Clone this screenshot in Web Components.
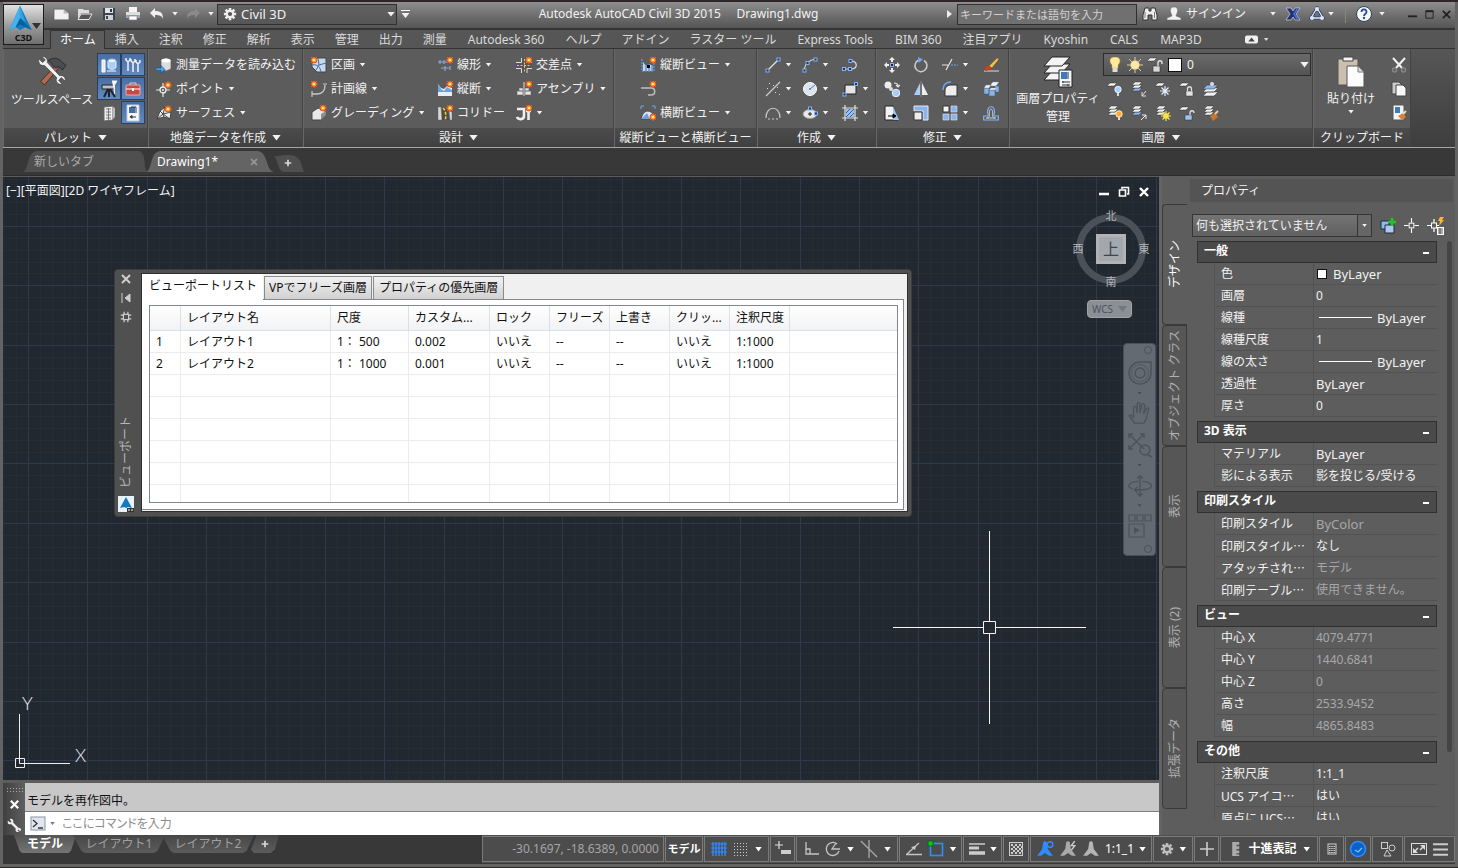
<!DOCTYPE html>
<html lang="ja">
<head>
<meta charset="utf-8">
<title>Autodesk AutoCAD Civil 3D 2015 - Drawing1.dwg</title>
<style>
html,body{height:100%}
body{margin:0;background:#636363;color:#f2f2f2;font:12px/16px "Noto Sans","Noto Sans CJK JP",sans-serif}
</style>
</head>
<body>
<cad-app></cad-app>
<script>
const RESET = `<style>
:host{box-sizing:border-box}
*,*::before,*::after{box-sizing:border-box}
button,input,select{font:inherit;color:inherit;background:none;border:0;padding:0;margin:0;outline:0;border-radius:0}
button{display:flex;align-items:center;justify-content:center;white-space:nowrap}
select{appearance:none}
a{color:inherit;text-decoration:none}
[hidden]{display:none!important}
</style>`;

function define(tag, html, ready) {
  const t = document.createElement('template');
  t.innerHTML = RESET + html;
  customElements.define(tag, class extends HTMLElement {
    constructor() {
      super();
      this.attachShadow({ mode: 'open' }).append(t.content.cloneNode(true));
    }
    connectedCallback() { if (ready) ready(this, this.shadowRoot); }
  });
}

/* ---------- icons ---------- */
const star = (x, y) => `<circle cx="${x}" cy="${y}" r="3.2" fill="#e8401c"/><path d="M${x} ${y-3.6}V${y+3.6}M${x-3.6} ${y}H${x+3.6}M${x-2.5} ${y-2.5}L${x+2.5} ${y+2.5}M${x+2.5} ${y-2.5}L${x-2.5} ${y+2.5}" stroke="#ff9a3c" stroke-width=".8"/><circle cx="${x}" cy="${y}" r="1.6" fill="#fff25a"/>`;
const node = (x, y) => `<rect x="${x-1.5}" y="${y-1.5}" width="3" height="3" fill="#26374f" stroke="#7fb4ff"/>`;
const sheet = (x, y, c = '#f4f4f4', w = 7) => `<path d="M${x+3} ${y}h${w}l-3 3h-${w}z" fill="${c}" stroke="#333" stroke-width=".5"/>`;
const sheets = (c = '#a9c8ee') => sheet(1, 7, c) + sheet(1, 4) + sheet(1, 1);
const ln = (d, c = '#e4e4e4', w = 1.2) => `<path d="${d}" fill="none" stroke="${c}" stroke-width="${w}"/>`;
const dash = (s, d) => s.replace('/>', ` stroke-dasharray="${d}"/>`);
const gear = (c, hole) => `<g transform="translate(8 8)"><g stroke="${c}" stroke-width="3"><path d="M0-7V7M-7 0H7M-5-5L5 5M5-5L-5 5"/></g><circle r="4.8" fill="${c}"/><circle r="2.4" fill="${hole}"/></g>`;
const person = c => `<path d="M8 1c1.4 0 1.8 1 1.8 2.500L10.500 8l4.500 6h-3.500L8 11.500 4.500 14H1l4.500-6 .7-4.500C6.200 2 6.600 1 8 1z" fill="${c}"/>`;

const ICONS = {
  logo: [40, `<path d="M19 3L7 30l7-3 5 3 6-3 7 3z" fill="#0f7ec4"/><path d="M19 3L7 30l7-3 5-9z" fill="#31a4e6"/><path d="M19 3l6 18-6-4-5 10-7 3z" fill="#54bdf2" opacity=".55"/><path d="M19 17l-5 10 5-3 6 3 7 3z" fill="#0b5f9d"/>`],
  new: [16, `<path d="M1 3h9l5 4v6H1z" fill="#f1f1f1" stroke="#555" stroke-width=".5"/><path d="M10 3v4h5z" fill="#b9b9b9"/>`],
  open: [16, `<path d="M1 3h5l1 1h5v3H4l-3 6z" fill="#ddd"/><path d="M4 8h11l-3 5.500H1z" fill="#555" stroke="#e6e6e6"/>`],
  save: [16, `<path d="M2 2h12v12H2z" fill="#3b4350"/><rect x="4" y="2" width="8" height="5" fill="#dfe4ea"/><rect x="4" y="9" width="8" height="5" fill="#cfd3d8"/><rect x="9" y="3" width="2" height="3" fill="#333"/><rect x="5" y="10" width="2" height="3" fill="#444"/>`],
  print: [16, `<path d="M4 1h8v5H4z" fill="#f6f6f6"/><path d="M1 6h14v5H1z" fill="#dedede"/><path d="M1 9h14v3H1z" fill="#9aa6b5"/><path d="M4 10h8v4H4z" fill="#fff" stroke="#777" stroke-width=".6"/>`],
  undo: [16, `<path d="M1 7l5-5v3c6 0 8 2 8 8-1-3-3-4-8-4v3z" fill="#f0f0f0"/>`],
  redo: [16, `<path d="M15 7l-5-5v3c-6 0-8 2-8 8 1-3 3-4 8-4v3z" fill="#8b8b8b"/>`],
  gear: [16, gear('#efefef', '#555')],
  gearS: [16, gear('#bdbdbd', '#555')],
  gearT: [16, ln('M5.500 1v4M10.500 1v4M5.500 11v4M10.500 11v4M1 5.500h4M1 10.500h4M11 5.500h4M11 10.500h4', '#cfcfcf', 1.6) + '<rect x="4.500" y="4.500" width="7" height="7" fill="none" stroke="#cfcfcf" stroke-width="1.600"/>'],
  binoc: [16, `<path d="M3 2h4v3h2V2h4l2 7v5h-5V9H6v5H1V9z" fill="#eee" stroke="#333"/><path d="M3 6v6M12.500 6v6" stroke="#777"/>`],
  user: [16, `<path d="M8 1c3 0 4 2 3.500 4.500C11 8 10 9 10 10l5 2v2H1v-2l5-2c0-1-1-2-1.500-4.500C4 3 5 1 8 1z" fill="#f2f2f2" stroke="#666" stroke-width=".5"/>`],
  exchange: [16, `<path d="M1 2h5l2 3 2-3h5l-4 6 4 6h-5l-2-3-2 3H1l4-6z" fill="#23336e" stroke="#cfd6ea" stroke-width=".7"/><path d="M11 3h3l-4 5 4 5h-3L8 8z" fill="#4a6cc4"/>`],
  a360: [16, `<path d="M8 2l6 10H2z" fill="none" stroke="#2c3d73" stroke-width="3"/><path d="M8 2l6 10H2z" fill="none" stroke="#e4e9f7" stroke-width="1.300"/><circle cx="8" cy="3" r="2" fill="#dfe6f7"/><circle cx="3" cy="12" r="2" fill="#dfe6f7"/><circle cx="13" cy="12" r="2" fill="#dfe6f7"/>`],
  help: [16, `<circle cx="8" cy="8" r="7.500" fill="#f3f6fb" stroke="#345"/><path d="M5.500 6c0-3.500 5-3.500 5 0 0 2-2.500 2-2.500 4" fill="none" stroke="#2b4d9b" stroke-width="1.800"/><circle cx="8" cy="12" r="1.200" fill="#2b4d9b"/>`],
  min: [12, ln('M1 8h10', '#222', 2)], max: [12, '<path d="M2 2h8v8H2z" fill="none" stroke="#222"/><path d="M2 2.500h8" stroke="#222" stroke-width="2"/>'], close: [12, ln('M2 2l8 8M10 2l-8 8', '#222', 2)],
  minW: [12, ln('M1 8h10', '#fff', 2.5)], restW: [12, '<path d="M4 3V1.500h6.500V8H9M1.500 4h6v6h-6z" fill="none" stroke="#fff" stroke-width="1.600"/>'], closeW: [12, ln('M2 2l8 8M10 2l-8 8', '#fff', 2.4)],
  closeG: [12, ln('M2 2l8 8M10 2l-8 8', '#cfcfcf', 2)], closeD: [12, ln('M3 3l6 6M9 3l-6 6', '#999', 1.6)],
  pin: [12, '<path d="M2 1v10M5 6l5-4v8z" fill="#cfcfcf" stroke="#cfcfcf"/>'],
  minimize: [20, '<rect x="0" y="4" width="20" height="12" rx="3" fill="#f0f0f0"/><path d="M10 7l5 6H5z" fill="#444"/>'],
  tools: [32, `<path d="M4 27L20 10l3 3L8 31z" fill="#b06a50" stroke="#3a2019" stroke-width=".8"/><path d="M12 5c5-4 11-3 14 1l5 4-4 5-4-4-3 2-4-4c-1-2-2-3-4-4z" fill="#4a4d52" stroke="#222" stroke-width=".8"/><path d="M2 3l4 4 3-3-4-3c4-1 7 2 6 6l13 14c4-1 7 2 6 6l-4-4-3 3 4 4c-4 1-8-2-6-7L8 10C4 11 1 8 2 3z" fill="#f3f3f3" stroke="#444" stroke-width=".8"/>`],
  tsurvey: [18, `<path d="M2 4h3v12H2zM7 15h9" stroke="#fff" fill="#dfe9f7"/><path d="M8 5v6c0 3 8 3 8 0V5" fill="#a8d0f7" stroke="#e8f3ff"/><ellipse cx="12" cy="5" rx="4" ry="2" fill="#eaf3ff" stroke="#9cc6f2"/>`],
  tfork: [18, ln('M2 2v2l2 2 2-2V2M4 6v9M7 3v2l2 2 2-2V3M9 7v9M12 4v2l2 2 2-2V4M14 8v8', '#f2f2f2', 1.5)],
  tstation: [18, `<path d="M2 5h12v4H2z" fill="#b9c0c8" stroke="#222"/><path d="M8 9L4 17M9 9v8M10 9l5 8" stroke="#20242a" stroke-width="2"/><path d="M12 1h5l-2.500 4v9" stroke="#eee" fill="#fff"/>`],
  tbox: [18, `<path d="M6 5V3h6v2" stroke="#fbb" fill="none"/><rect x="2" y="5" width="14" height="10" rx="1" fill="#c9473f" stroke="#e9b0a8"/><path d="M2 9h14" stroke="#fff"/><rect x="8" y="8" width="2" height="3" fill="#fff"/>`],
  tcalc: [18, `<path d="M4 3l9-1v14l-9 1z" fill="#eee" stroke="#666"/><path d="M6 5h5M6 8h5M6 11h5M6 14h5M8.500 4v12" stroke="#777"/><path d="M13 3l2 1v9l-2 2z" fill="#bbb"/>`],
  tprop: [18, `<path d="M3 1h12v16H3z" fill="#f6f8fb" stroke="#bcd"/><path d="M5 3h6v6H5z" fill="#3f6fb0"/><path d="M7 3h5M12 3v6" stroke="#333"/><path d="M6 13h6M6 13l2-1.500v3" stroke="#333" fill="#333"/>`],
  import: [16, `<path d="M5 3l5-2 5 2v9l-5 2-5-2z" fill="#dcdcdc" stroke="#555" stroke-width=".6"/><ellipse cx="10" cy="3.500" rx="4.500" ry="2" fill="#fff"/><path d="M0 11h5V8.500l4 4-4 3.500v-2.500H0z" fill="#4aa0ee" stroke="#12508e" stroke-width=".6"/>`],
  point: [16, `<circle cx="7" cy="9" r="3" fill="none" stroke="#eee" stroke-width="1.300"/>` + ln('M7 2v4M7 12v4M0 9h4M10 9h4M7 8v2M6 9h2') + star(12, 4)],
  surface: [16, `<path d="M1 14L4 6l5-4 6 5-1 7-6-2z" fill="#ececec" stroke="#444"/><path d="M1 14l6-5 7 5M7 9L4 6M7 9l2-7M7 9l8-2M7 9l1 4" stroke="#444" fill="none"/>` + star(12, 4)],
  parcel: [16, `<path d="M1 6l5-5h9v14H6L1 10z" fill="#c5d8f0" stroke="#444"/><path d="M1 8c6-1 8 2 9 7M7 1l1 7 7-2M8 8l-3 5" stroke="#4c6c94" fill="none"/>` + star(3, 3)],
  feature: [16, ln('M1 13h5c6 0 8-3 8-9', '#c8c8c8', 1.3) + ln('M1 10v6M12 3l4 0', '#c8c8c8') + star(3, 3)],
  grading: [16, `<path d="M1 7l6-4 7 3 1 4-5 5H1z" fill="#e8e8e8" stroke="#444"/><path d="M10 15V9l5-3v4z" fill="#8d8d8d"/>` + star(12, 3)],
  align: [16, ln('M1 5h9M3 3v4M7 3v4M4 11h8M8 9v5M13 9v4', '#86a9d8') + star(13, 3)],
  profile: [16, `<path d="M1 3l3 4 3 1 3-3 5 2v8H1z" fill="#e8eef6"/><path d="M1 3l3 5 3 2 3-4 5 3v2H1z" fill="#6fa0de"/>` + star(13, 3)],
  corridor: [16, `<path d="M1 2h3l1 13H1zM12 6l3 1v8h-2z" fill="#d8d8d8" stroke="#555" stroke-width=".4"/><path d="M5 2c5 1 7 4 7 13H5z" fill="#4b4b4b"/><path d="M6 3c3 3 3 6 2.500 12" stroke="#f5d12e" stroke-width="1.600" fill="none" stroke-dasharray="3 1.500"/>` + star(13, 3)],
  cross: [16, `<path d="M0 6h16v5H0zM6 1h5v15H6z" fill="#555"/><path d="M0 5.500h5.500V1M11 1v4.500h5M0 11.500h5.500V16M11 16v-4.500h5" stroke="#ddd" fill="none"/><path d="M1 8.500h14M8.500 2v13" stroke="#f0cc38" stroke-dasharray="2 1.500"/>` + star(13, 3)],
  assembly: [16, `<path d="M1 10h6v4H1zM9 10h6v4H9zM3 7h4v3H3zM9 7h4v3H9z" fill="#e2e2e2" stroke="#555" stroke-width=".5"/><path d="M8 1v14" stroke="#ddd"/>` + star(13, 3)],
  pipe: [16, `<path d="M1 4h7v7c0 4-6 4-7 1" fill="none" stroke="#eee" stroke-width="2.600"/><path d="M10 6h5M12.500 7v8" stroke="#eee" stroke-width="2.600"/>` + star(13, 3)],
  pview: [16, `<path d="M2 2v12h12V6" fill="none" stroke="#6fa8ec" stroke-dasharray="2 1"/><path d="M3 5l3 4 3-2 4 2v5H3z" fill="#bcd7f7"/><path d="M6 9v5M9 7v7M12 9v5" stroke="#2e6cb8"/><path d="M7 8h3v3H7z" fill="#000"/>` + star(13, 3)],
  sline: [16, ln('M1 7h10c5 0 5 7 0 7H8', '#bdbdbd', 1.5) + star(13, 3)],
  sview: [16, `<path d="M1 4V1h3M12 1h3v3" fill="none" stroke="#6fa8ec"/><path d="M1 14c2-9 8-10 12-5v5z" fill="#dce7f5" stroke="#444"/><path d="M1 14l6-6 3 6" fill="#6f9edb"/>` + star(13, 12)],
  line: [16, ln('M2 14L14 2') + node(2.5, 13.5) + node(13.5, 2.5)],
  arc: [16, ln('M2 13C3 7 6 3 14 2') + node(2.5, 13.5) + node(5.5, 6) + node(13.5, 2.5)],
  pline: [16, ln('M2 12h7M9 12c7 0 7-8 0-8', '#ddd') + node(2, 12) + node(8, 12) + node(8.5, 4)],
  xline: [16, ln('M1 15L15 1', '#ccc') + `<path d="M4 2h1v1H4zM8 4h1v1H8zM2 7h1v1H2zM12 6h1v1h-1zM10 11h1v1h-1zM14 13h1v1h-1z" fill="#ddd"/>`],
  circle: [16, `<circle cx="8" cy="8" r="6.500" fill="#dfe5ee" stroke="#fff"/><path d="M8 8l5-4" stroke="#3f82d8"/><circle cx="8" cy="8" r="1" fill="#3f82d8"/>`],
  rect: [16, `<path d="M3 4h11v9H3z" fill="#e5e5e5" stroke="#222"/>` + node(2.5, 13.5) + node(14, 3)],
  curve: [16, ln('M1 13C1 0 15 0 15 13', '#ccc') + ln('M3 14h2M7 14h2M11 14h2', '#ccc')],
  ellipse: [16, `<ellipse cx="8" cy="9" rx="7" ry="4.500" fill="#e8e8e8" stroke="#999"/><path d="M8 7v4M6 9h4" stroke="#222"/>` + node(8, 3.5) + node(14, 8.5)],
  hatch: [16, `<path d="M4 4h8v8H4z" fill="#9cc2f2"/><path d="M4 8l4-4M4 12l8-8M8 12l4-4" stroke="#2a5fa8"/>` + ln('M3 0v16M13 0v16M0 3h16M0 13h16', '#e2e2e2')],
  move: [16, `<path d="M8 0l3 3H9v2H7V3H5zM8 16l-3-3h2v-2h2v2h2zM0 8l3-3v2h2v2H3v2zM16 8l-3 3V9h-2V7h2V5z" fill="#eee"/><rect x="6.500" y="6.500" width="3" height="3" fill="#222" stroke="#7fb4ff"/>`],
  rotate: [16, ln('M11 3.500A6 6 0 1 1 6 3', '#ccc', 1.5) + `<path d="M5 0l5 2.500L5.500 6z" fill="#6ba7f0"/>`],
  trim: [16, ln('M0 8h6M4 13L10 2') + dash(ln('M9 8h7', '#6ba7f0'), '2 1')],
  match: [16, `<path d="M1 14h15" stroke="#ddd"/><path d="M2 14c0-5 3-6 5-5s0 5-5 5z" fill="#d83a14"/><path d="M6 9L14 1l2 1-7 9z" fill="#f0c050" stroke="#7a4a10" stroke-width=".5"/>`],
  copy: [16, `<circle cx="4" cy="4" r="3.500" fill="#eee"/><circle cx="7" cy="8" r="2" fill="#ddd"/><circle cx="12" cy="12" r="3.800" fill="#a9cdf7" stroke="#e6f0fb"/>` + ln('M10 2c3 0 4 1 4 3M12 4l2 2 2-2')],
  mirror: [16, `<path d="M7 2v12H1z" fill="#a9cdf7"/><path d="M9 2v12h6z" fill="#eee"/><path d="M8 0v16" stroke="#888"/>`],
  fillet: [16, `<path d="M3 15V9c0-3 3-5 6-5h6v11z" fill="#eee" stroke="#333"/><path d="M1 9c0-5 3-8 8-8" stroke="#6ba7f0" stroke-width="1.600" fill="none"/>`],
  explode: [16, `<path d="M1 7h5v6H1zM6 9h6v6H6zM12 5h4v6h-4z" fill="#8fb3e0" stroke="#45638c" stroke-width=".6"/><path d="M1 7l2-3h5L6 7zM6 9l2-2h6l-2 2zM8 3l2-2h6l-3 4H8z" fill="#eef4fb" stroke="#66819f" stroke-width=".4"/>`],
  stretch: [16, `<path d="M1 1h8l5 14H1z" fill="#f2f2f2" stroke="#222"/><path d="M9 1l6 14H9z" fill="#9cc4f2"/><path d="M4 11h7M9 9l3 2-3 2z" stroke="#000" fill="#000"/>`],
  scale: [16, `<path d="M1 1h14v14h-5V6H1z" fill="#8cb3ea" stroke="#e0eaf8"/><path d="M1 7h8v8H1z" fill="#eee" stroke="#333"/>`],
  array: [16, `<path d="M1 1h6v6H1z" fill="#f4f4f4" stroke="#333"/><path d="M9 1h6v6H9zM1 9h6v6H1zM9 9h6v6H9z" fill="#8cb3ea" stroke="#dce8fa" stroke-width=".6"/>`],
  offset: [16, ln('M.7 15v-4h3.300c2 0 1-2 .5-4 0-7 7-7 7 0-.5 2-1.500 4 .5 4h3.300v4z', '#7fb4ff') + ln('M3 13h10M4 13c4-1 2-4 2.500-6.500 0-3 3-3 3 0C10 9 8 12 12 13', '#ddd', .9)],
  layers: [32, `<g stroke="#222">` + [15, 8, 1].map(y => `<path d="M10 ${y}h18l-8 9H2z" fill="#f4f4f4"/>`).join('') + `</g><path d="M17 14h13v17H17z" fill="#f2f5f9" stroke="#222"/><path d="M19 16h6v7h-6z" fill="#4377c0"/><path d="M26 16v7M20 26h8M20 29h8M21 25v2M26 28v2" stroke="#333"/>`],
  bulb: [16, `<path d="M8 0c6 0 6 5 3 8v3H5V8C2 5 2 0 8 0z" fill="#fdeb9a" stroke="#c9a63a" stroke-width=".5"/><path d="M5.500 11h5v4h-5z" fill="#ddd"/>`],
  sun: [16, ln('M8 0v16M0 8h16M2 2l12 12M14 2L2 14', '#d8cfae', 1) + `<circle cx="8" cy="8" r="4.500" fill="#fbe9ac" stroke="#c8ab58" stroke-width=".5"/>`],
  lunlock: [16, sheet(0, 1) + `<path d="M6 9h7v6H6z" fill="#d8d8d8" stroke="#333" stroke-width=".6"/><path d="M11 9V6c0-3 4-3 4 0v1" stroke="#ddd" fill="none" stroke-width="1.400"/>`],
  l1: [16, sheet(0, 2) + `<circle cx="11" cy="8.500" r="3.200" fill="#a8d2fb" stroke="#e6f2ff"/><path d="M10 12h2v3h-2z" fill="#ddd"/>`],
  l2: [16, sheets('#8fb8ec') + ln('M15 10l-4 5M11 11v4h4', '#ddd', 1)],
  l3: [16, sheet(0, 2) + ln('M10 5v10M5 10h10M6.500 6.500l7 7M13.500 6.500l-7 7', '#e2efff', 1.2)],
  l4: [16, sheet(0, 2) + `<path d="M7 10h7v5H7z" fill="#e2e2e2" stroke="#333" stroke-width=".5"/><path d="M8.500 10V8c0-3 4-3 4 0v2" stroke="#ddd" fill="none" stroke-width="1.300"/>`],
  l5: [16, `<path d="M4 11h11l-4 4H0zM4 7h11l-4 4H0z" fill="#f0f0f0" stroke="#333" stroke-width=".5"/><path d="M4 4h11l-4 4H0z" fill="#86b6f0" stroke="#333" stroke-width=".5"/><circle cx="9" cy="3" r="2" fill="#ddd"/>`],
  l6: [16, sheets('#eee') + `<circle cx="12" cy="9" r="3.200" fill="#ffac2e" stroke="#fff0c0"/><path d="M11 12h2v3h-2z" fill="#ddd"/>`],
  l7: [16, sheets('#8fb8ec') + ln('M10 15l5-5M11 10h4v4', '#eee', 1)],
  l8: [16, sheets('#eee') + ln('M11 6v10M6 11h10M7.500 7.500l7 7M14.500 7.500l-7 7', '#ffe14a') + `<circle cx="11" cy="11" r="2.800" fill="#ffe14a"/>`],
  l9: [16, sheet(0, 2) + `<path d="M6 10h7v5H6z" fill="#9cc4f2" stroke="#333" stroke-width=".5"/><path d="M11 10V8c0-3 4-3 4 0" stroke="#ddd" fill="none" stroke-width="1.300"/>`],
  l10: [16, sheets('#eee') + `<path d="M7 11l5-3 3 4-5 4z" fill="#c9762a"/><path d="M12 9l3-3" stroke="#e8c9a0" stroke-width="2"/>`],
  paste: [32, `<path d="M3 3h20v26H3z" fill="#cbbfae" stroke="#555"/><path d="M8 1h10v4H8z" fill="#f5f5f5" stroke="#444"/><path d="M12 10h11l6 6v15H12z" fill="#fcfcfc" stroke="#555"/><path d="M23 10v6h6z" fill="#ddd" stroke="#777"/>`],
  cut: [16, ln('M2 1l9 10M14 1L5 11', '#f2f2f2', 2) + `<circle cx="3.500" cy="13" r="2" fill="none" stroke="#888" stroke-width="1.400"/><circle cx="12.500" cy="13" r="2" fill="none" stroke="#888" stroke-width="1.400"/>`],
  pages: [16, `<path d="M1 1h7l3 3v9H1z" fill="#ccc" stroke="#444"/><path d="M5 4h7l3 3v8H5z" fill="#f8f8f8" stroke="#444"/>`],
  pastep: [16, `<path d="M2 0h11v15H2z" fill="#f2f5f9" stroke="#555"/><path d="M4 2h5v6H4z" fill="#4377c0"/><path d="M7 11l5-3 3 4-4 3z" fill="#d98235"/><path d="M12 9l3-3" stroke="#f1d9ba" stroke-width="2"/>`],
  addsel: [16, `<path d="M1 3h8v8H1z" fill="#8fb8ec" stroke="#1f2c3d"/><path d="M5 7h9v8H5z" fill="#a9c9f0" stroke="#1f2c3d"/><path d="M12 0v8M8 4h8" stroke="#27c027" stroke-width="2.600"/>`],
  pick: [16, ln('M8 0v5M8 11v5M0 8h5M11 8h5', '#fff') + `<rect x="5.500" y="5.500" width="5" height="5" fill="none" stroke="#fff"/>`],
  quick: [18, ln('M7 2v4M7 11v4M0 8.500h4M9 8.500h3', '#fff') + `<rect x="4.500" y="6" width="5" height="5" fill="none" stroke="#fff"/><path d="M13 0h4l-2 3h2l-5 6 1-5h-2z" fill="#ffb52e"/><path d="M10 10h7v8h-7z" fill="#fff"/><path d="M11 12h5M11 14h5M11 16h5M13 11v6" stroke="#333" stroke-width=".8"/>`],
  wheel: [26, `<path d="M2 13a11 11 0 0 1 11-11h11v11a11 11 0 0 1-22 0z" fill="none" stroke="#4c535b" stroke-width="1.500"/><circle cx="13" cy="13" r="5" fill="none" stroke="#4c535b" stroke-width="1.500"/><circle cx="13" cy="13" r="8.500" fill="none" stroke="#4c535b" stroke-width=".7"/>`],
  hand: [26, ln('M7 24c-2-4-4-6-6-8 1-2 4 0 5 2V7c1-2 3-1 3 0l1 6V3c1-2 3-1 3 0v10l2-9c1-2 3-1 3 1l-1 9 3-6c2-1 3 0 2 2-2 6-2 11-5 14z', '#4c535b', 1.4)],
  zoomx: [26, ln('M2 2l15 15M17 2L2 17M2 6V2h4M13 2h4v4M2 13v4h4M21 23l4 2', '#4c535b', 1.5) + '<circle cx="18" cy="18" r="5" fill="none" stroke="#4c535b" stroke-width="1.500"/>'],
  orbit: [26, ln('M13 2v22M10 5l3-3 3 3M10 21l3 3 3-3M16 8c13 1 12 9-1 9H8M10 14l-3 3 3 3M11 8c-12 1-12 7-6 8', '#4c535b', 1.5)],
  motion: [26, ln('M2 2h6v6H2zM10 2h6v6h-6zM18 2h6v6h-6zM2 11h15v13H2z', '#4c535b', 1.2) + '<path d="M7 14l6 3-6 4z" fill="#4c535b"/>'],
  wrench: [16, `<path d="M1 3l3 2 1-1-2-3c3-1 5 1 4 4l6 6c3 0 4 3 2 4l-2-2-1 1 2 2c-3 1-5-1-4-4L5 7C2 8 0 6 1 3z" fill="#eee"/>`],
  prompt: [16, `<rect x="1" y="1" width="14" height="13" fill="#dfe6ee" stroke="#8a96a5"/><path d="M3 4l4 3.500L3 11M8 12h5" stroke="#333" fill="none" stroke-width="1.300"/>`],
  sgrid: [16, ln('M2 1v14M5 1v14M8 1v14M11 1v14M14 1v14', '#2f8cff', 1.4) + ln('M0 3h16M0 7h16M0 11h16', '#2f8cff', 1)],
  sdots: [16, dash(ln('M1 2.500h14M1 5.500h14M1 8.500h14M1 11.500h14M1 14.500h14', '#cfcfcf', 1), '1 2')],
  sinfer: [18, ln('M5 1v8M1 5h8', '#ddd') + '<rect x="7" y="10" width="10" height="4" fill="#ccc"/>'],
  sortho: [16, ln('M3 1v12h13M3 8h4v5', '#c4c4c4', 1.3)],
  spolar: [16, ln('M15 8H7l4-6M14 10A6.500 6.500 0 1 1 12 3', '#c4c4c4', 1.3)],
  siso: [20, ln('M1 1l18 18M10 0v20', '#a6a6a6', 1.5)],
  sangle: [18, ln('M2 14L14 3M1 14.500h16', '#c4c4c4', 1.3) + '<path d="M6 7l4 3 1-4z" fill="#ccc"/>'],
  sosnap: [18, '<rect x="3.500" y="3.500" width="12" height="12" fill="none" stroke="#2f8cff" stroke-width="1.600"/><rect x="1" y="1" width="5" height="5" fill="#18c018" stroke="#063"/>'],
  slw: [18, ln('M1 4h16', '#ccc', 1.5) + ln('M1 8h10', '#ccc', 3) + ln('M1 13h16', '#ccc', 3.5)],
  strans: [16, '<rect x="1.500" y="1.500" width="13" height="13" fill="#555" stroke="#ccc"/>' + dash(ln('M3 4h11M3 8h11M3 12h11', '#ccc', 2), '2 2') + dash(ln('M5 6h9M5 10h9', '#ccc', 2), '2 2')],
  sp1: [16, person('#2f8cff') + '<circle cx="12.500" cy="4" r="2.500" fill="none" stroke="#2f8cff" stroke-width="1.300"/>'],
  sp2: [16, person('#a9a9a9') + ln('M14 1l-3 4h3l-3 4', '#ccc', 1.3)], sp3: [16, person('#b5b5b5')],
  splus: [16, ln('M8 1v14M1 8h14', '#ccc', 1.6)],
  sruler: [10, '<path d="M3 0h5v2H6v1h2v2H6v1h2v2H6v1h2v1H3z" fill="#aaa"/>'],
  scalc: [14, '<rect x="3" y="2" width="8" height="10" fill="none" stroke="#ccc"/>' + dash(ln('M4 4.500h6M4 6.500h6M4 8.500h6M4 10.500h6', '#ccc', 1), '1.5 .7')],
  shw: [18, '<circle cx="9" cy="9" r="7.500" fill="#0a62c4" stroke="#2f8cff" stroke-width="1.600"/><path d="M6 10l3 2 4-4" stroke="#7cc0ff" fill="none" stroke-width="1.200"/>'],
  siso2: [16, '<rect x="1.500" y="1.500" width="6" height="6" fill="none" stroke="#ccc"/><circle cx="12" cy="7" r="3" fill="none" stroke="#ccc"/><path d="M7 9l4 6H4z" fill="none" stroke="#ccc"/>'],
  sfull: [18, '<rect x="1.500" y="3.500" width="15" height="11" fill="none" stroke="#ddd"/><path d="M10 5h5v5zM3 8v5h5z" fill="#ddd"/><path d="M10 10l3-3M5 11l3-3" stroke="#ddd" stroke-width="1.500"/>'],
  smenu: [16, ln('M1 3h14M1 8h14M1 13h14', '#ccc', 1.8)],
  plus: [12, ln('M6 2v8M2 6h8', '#d8d8d8', 2)],
  cube: [16, '<rect width="16" height="16" fill="#e9f2fa"/><path d="M8 1L2 12l4-1 2 1 2-1 4 1z" fill="#1279c2"/><path d="M9 12h7v4H9z" fill="#333"/><path d="M10 14h2M13 14h2" stroke="#fff"/>']
};

define('cad-icon', `<style>:host{display:inline-flex;flex:none}svg{display:block}</style><svg aria-hidden="true"></svg>`, (el, root) => {
  const [box, art] = ICONS[el.getAttribute('name')] || [16, ''];
  const size = el.getAttribute('size') || Math.min(box, 32);
  const svg = root.querySelector('svg');
  svg.setAttribute('width', size);
  svg.setAttribute('height', size);
  svg.setAttribute('viewBox', `0 0 ${box} ${box}`);
  svg.innerHTML = art;
});

/* small drop-down triangle */
define('cad-arrow', `<style>
:host{display:inline-block;flex:none;width:7px;height:4px;background:currentColor;clip-path:polygon(12% 0,88% 0,50% 90%)}
:host([big]){width:9px;height:6px;clip-path:polygon(0 0,100% 0,50% 100%)}
</style>`);

/* ---------- title bar ---------- */
define('title-bar', `<style>
:host{display:flex;align-items:center;flex:none;height:28px;padding:0 0 2px 47px;background:linear-gradient(#8e8e8e,#6a6a6a 60%,#555);border-bottom:2px solid #343434}
.qat{display:flex;align-items:center;gap:2px}
.qat button{width:22px;height:22px}
.qat button.drop{width:10px}
.ws{display:flex;align-items:center;width:180px;height:21px;margin-left:1px;padding:0 1px 0 5px;gap:4px;border:1px solid #303030;background:linear-gradient(#626262,#565656)}
.ws select{flex:1;min-width:0;font-size:13px;height:18px}
.ws cad-arrow,.more cad-arrow{width:8px;height:5px}
.more{margin-left:4px;width:9px;height:10px;flex-direction:column;gap:2px}
.more i{width:9px;height:1px;background:#fff}
h1{flex:1;margin:0;font:inherit;text-align:center;white-space:pre}
.search{width:180px;height:21px;border:1px solid #303030;background:#707070;padding:0 2px;font-size:11px;margin-left:5px}
.search::placeholder{color:#d2d2d2;opacity:1}
.right{display:flex;align-items:center}
.right button{height:22px}
.play{width:5px;height:8px;background:#eee;clip-path:polygon(0 0,100% 50%,0 100%)}
.sep{width:1px;height:18px;background:#858585;margin:0 9px 0 10px}
</style>
<div class="qat">
<button aria-label="新規"><cad-icon name="new" size="17"></cad-icon></button>
<button aria-label="開く"><cad-icon name="open"></cad-icon></button>
<button aria-label="保存"><cad-icon name="save"></cad-icon></button>
<button aria-label="印刷"><cad-icon name="print"></cad-icon></button>
<button aria-label="元に戻す"><cad-icon name="undo"></cad-icon></button>
<button class="drop" aria-label="履歴"><cad-arrow></cad-arrow></button>
<button aria-label="やり直し"><cad-icon name="redo"></cad-icon></button>
<button class="drop" aria-label="履歴"><cad-arrow></cad-arrow></button>
</div>
<div class="ws"><cad-icon name="gear" size="14"></cad-icon><select aria-label="ワークスペース"><option>Civil 3D</option></select><cad-arrow big></cad-arrow></div>
<button class="more" aria-label="カスタマイズ"><i></i><cad-arrow big></cad-arrow></button>
<h1>Autodesk AutoCAD Civil 3D 2015     Drawing1.dwg</h1>
<div class="right">
<span class="play"></span>
<input class="search" type="search" aria-label="検索" placeholder="キーワードまたは語句を入力">
<button style="width:25px" aria-label="検索実行"><cad-icon name="binoc"></cad-icon></button>
<button style="width:24px" aria-label="ユーザー"><cad-icon name="user"></cad-icon></button>
<button style="width:60px">サインイン</button>
<button style="width:37px;padding-left:17px" aria-label="サインインメニュー"><cad-arrow></cad-arrow></button>
<button style="width:20px" aria-label="Exchange"><cad-icon name="exchange"></cad-icon></button>
<button style="width:24px;padding-left:4px" aria-label="A360"><cad-icon name="a360"></cad-icon></button>
<button style="width:8px" aria-label="A360 メニュー"><cad-arrow></cad-arrow></button>
<span class="sep"></span>
<button style="width:18px" aria-label="ヘルプ"><cad-icon name="help"></cad-icon></button>
<button style="width:18px" aria-label="ヘルプメニュー"><cad-arrow></cad-arrow></button>
<button style="width:17px;margin-left:13px" aria-label="最小化"><cad-icon name="min" size="11"></cad-icon></button>
<button style="width:17px" aria-label="最大化"><cad-icon name="max" size="11"></cad-icon></button>
<button style="width:17px" aria-label="閉じる"><cad-icon name="close" size="11"></cad-icon></button>
</div>`);

define('app-menu', `<style>
:host{display:block}
button{position:relative;flex-direction:column;width:41px;height:41px;border:1px solid #1b1b1b;background:linear-gradient(#e2e2e2,#9a9a9a 55%,#6f6f6f)}
cad-icon{margin:-2px 6px -7px 0}
cad-arrow{position:absolute;right:2px;top:18px;color:#333}
b{font:700 9px/12px "Open Sans",sans-serif;color:#111}
</style><button aria-label="アプリケーションメニュー"><cad-icon name="logo" size="36"></cad-icon><b>C3D</b><cad-arrow big></cad-arrow></button>`);

/* ---------- ribbon tabs ---------- */
define('ribbon-tabs', `<style>
:host{display:flex;align-items:stretch;flex:none;height:19px;padding-left:46px;background:#565656;border-bottom:1px solid #333}
button{padding:0 10px;color:#dadada;height:19px}
button.en{padding:0 11px}
button[aria-selected=true]{background:#5c5c5c;color:#fff;border:1px solid #333;border-bottom:0;margin:0 0 0 1px;padding:0 8px 0 9px}
.min{margin-left:22px;gap:5px}
</style>`, (el, root) => {
  root.innerHTML += ['ホーム','挿入','注釈','修正','解析','表示','管理','出力','測量','Autodesk 360','ヘルプ','アドイン','ラスター ツール','Express Tools','BIM 360','注目アプリ','Kyoshin','CALS','MAP3D']
    .map((t, i) => `<button role="tab" class="${/^[A-Z]/.test(t) ? 'en' : ''}" aria-selected="${i === 0}">${t}</button>`).join('') +
    `<button class="min" aria-label="リボンを最小化"><cad-icon name="minimize" size="13"></cad-icon><cad-arrow></cad-arrow></button>`;
});

/* ---------- ribbon ---------- */
define('ribbon-panel', `<style>
:host{display:flex;flex-direction:column;flex:none;width:var(--w);background:#5c5c5c;border-right:1px solid #434343;border-left:1px solid #686868}
.body{flex:1;display:flex;align-items:flex-start;padding:4px 0 0 7px}
footer{display:flex;align-items:center;justify-content:center;gap:6px;height:19px;background:linear-gradient(#4c4c4c,#404040);white-space:nowrap}
</style><div class="body"><slot></slot></div><footer><span></span><cad-arrow big></cad-arrow></footer>`, (el, root) => {
  root.querySelector('span').textContent = el.getAttribute('label');
  root.querySelector('cad-arrow').hidden = el.hasAttribute('plain');
});

define('ribbon-button', `<style>
:host{display:block}
button{height:24px;gap:4px}
</style><button><cad-icon></cad-icon><slot></slot><cad-arrow></cad-arrow></button>`, (el, root) => {
  const icon = root.querySelector('cad-icon'), n = document.createElement('cad-icon');
  n.setAttribute('name', el.getAttribute('icon'));
  icon.replaceWith(n);
  if (!el.textContent) { root.querySelector('slot').remove(); root.querySelector('button').setAttribute('aria-label', el.getAttribute('icon')); }
  root.querySelector('cad-arrow').hidden = !el.hasAttribute('menu');
});

const rb = (icon, menu, text = '') => `<ribbon-button icon="${icon}"${menu ? ' menu' : ''}>${text}</ribbon-button>`;
define('cad-ribbon', `<style>
:host{display:flex;flex:none;height:99px;background:linear-gradient(#565656,#3e3e3e);border-bottom:1px solid #a5a5a5}
.grid{display:grid;grid-auto-rows:24px}
.big{flex-direction:column;justify-content:flex-start;line-height:18px;height:72px;padding-top:3px;gap:2px}
.tog{display:grid;grid-template-columns:24px 24px;grid-auto-rows:24px;margin-left:4px}
.tog button{width:24px;height:23px;border:1px solid #27405f;background:linear-gradient(#4a6ea3,#6289bf)}
.tog button.off{background:none;border-color:transparent}
.layer{display:flex;align-items:center;gap:4px;width:208px;height:23px;border:1px solid #2c2c2c;background:linear-gradient(#6a6a6a,#545454);padding:0 1px 0 3px}
.layer select{flex:1;min-width:0}
.layer i{width:14px;height:14px;background:#fff;border:1px solid #111;margin:0 1px}
.small{grid-template-columns:repeat(5,24px);margin-left:4px;padding-top:1px}
</style>
<ribbon-panel label="パレット" style="--w:145px">
<button class="big" style="width:82px"><cad-icon name="tools" size="30"></cad-icon><span style="margin-top:3px">ツールスペース</span></button>
<div class="tog">
<button aria-label="測量"><cad-icon name="tsurvey"></cad-icon></button><button aria-label="設定"><cad-icon name="tfork"></cad-icon></button>
<button aria-label="プロスペクター"><cad-icon name="tstation"></cad-icon></button><button aria-label="ツールボックス"><cad-icon name="tbox"></cad-icon></button>
<button class="off" aria-label="計算"><cad-icon name="tcalc"></cad-icon></button><button aria-label="プロパティ"><cad-icon name="tprop"></cad-icon></button>
</div></ribbon-panel>
<ribbon-panel label="地盤データを作成" style="--w:155px"><div class="grid">${rb('import',0,'測量データを読み込む')}${rb('point',1,'ポイント')}${rb('surface',1,'サーフェス')}</div></ribbon-panel>
<ribbon-panel label="設計" style="--w:311px"><div class="grid" style="grid-template-columns:126px 79px auto">
${rb('parcel',1,'区画')}${rb('align',1,'線形')}${rb('cross',1,'交差点')}
${rb('feature',1,'計画線')}${rb('profile',1,'縦断')}${rb('assembly',1,'アセンブリ')}
${rb('grading',1,'グレーディング')}${rb('corridor',0,'コリドー')}${rb('pipe',1)}</div></ribbon-panel>
<ribbon-panel label="縦断ビューと横断ビュー" plain style="--w:143px"><div class="grid" style="margin-left:18px">${rb('pview',1,'縦断ビュー')}${rb('sline',0)}${rb('sview',1,'横断ビュー')}</div></ribbon-panel>
<ribbon-panel label="作成" style="--w:119px"><div class="grid" style="grid-template-columns:37px 40px auto">
${rb('line',1)}${rb('arc',1)}${rb('pline',0)}${rb('xline',1)}${rb('circle',1)}${rb('rect',1)}${rb('curve',1)}${rb('ellipse',1)}${rb('hatch',1)}</div></ribbon-panel>
<ribbon-panel label="修正" style="--w:133px"><div class="grid" style="grid-template-columns:29px 29px 41px auto">
${rb('move',0)}${rb('rotate',0)}${rb('trim',1)}${rb('match',0)}${rb('copy',0)}${rb('mirror',0)}${rb('fillet',1)}${rb('explode',0)}${rb('stretch',0)}${rb('scale',0)}${rb('array',1)}${rb('offset',0)}</div></ribbon-panel>
<ribbon-panel label="画層" style="--w:304px">
<button class="big" style="width:82px"><cad-icon name="layers" size="32"></cad-icon><span>画層プロパティ<br>管理</span></button>
<div style="margin-left:4px"><div class="layer"><cad-icon name="bulb"></cad-icon><cad-icon name="sun"></cad-icon><cad-icon name="lunlock"></cad-icon><i></i><select aria-label="画層"><option>0</option></select><cad-arrow big></cad-arrow></div>
<div class="grid small">${['l1','l2','l3','l4','l5','l6','l7','l8','l9','l10'].map(i => rb(i,0)).join('')}</div></div>
</ribbon-panel>
<ribbon-panel label="クリップボード" plain style="--w:98px">
<button class="big" style="width:60px"><cad-icon name="paste" size="32"></cad-icon><span>貼り付け</span><cad-arrow></cad-arrow></button>
<div class="grid" style="margin-left:10px">${rb('cut',0)}${rb('pages',0)}${rb('pastep',0)}</div></ribbon-panel>`);

/* ---------- document tabs ---------- */
define('doc-tabs', `<style>
:host{display:flex;align-items:flex-end;flex:none;height:28px;padding:0 0 3px 19px;background:#383838;border-bottom:1px solid #2c2c2c}
button{position:relative;height:21px;width:127px;justify-content:flex-start;color:#a9a9a9;padding:0 0 0 12px;z-index:0}
button svg{position:absolute;inset:0;width:100%;height:100%;z-index:-1}
.on{color:#fff;width:130px;margin-left:-4px;justify-content:space-between;padding:0 15px 0 12px}
.add{width:32px;padding:0;margin-left:-3px;height:18px;justify-content:center}
</style>
<button><svg viewBox="0 0 130 22" preserveAspectRatio="none"><path d="M0 22C8 22 4 0 16 0H118C130 0 122 22 130 22z" fill="#4f4f4f"/></svg>新しいタブ</button>
<button class="on" aria-current="page"><svg viewBox="0 0 130 22" preserveAspectRatio="none"><path d="M0 22C8 22 4 0 16 0H112C124 0 120 22 130 22z" fill="#646464"/></svg>Drawing1*<cad-icon name="closeD" size="12"></cad-icon></button>
<button class="add" aria-label="新しいタブを追加"><svg viewBox="0 0 32 22" preserveAspectRatio="none"><path d="M2 3C16 0 24 0 28 8L32 22H12C6 22 6 6 2 3z" fill="#4f4f4f"/></svg><cad-icon name="plus" size="10"></cad-icon></button>`);

/* ---------- drawing canvas ---------- */
define('drawing-grid', `<style>:host{display:block;position:absolute;inset:0;overflow:hidden}svg{display:block;width:100%;height:100%}</style><svg></svg>`, (el, root) => {
  const at = (o, i) => Math.round(o + i * 831 / 70);
  let major = '', minor = '';
  for (let i = -5; i < 260; i++) {
    const x = at(25, i), y = at(49, i);
    if (x >= 0) (i % 5 ? minor += `M${x}.5 0V2000` : major += `M${x}.5 0V2000`);
    if (y >= 0 && i < 160) (i % 5 ? minor += `M0 ${y}.5H3000` : major += `M0 ${y}.5H3000`);
  }
  root.querySelector('svg').innerHTML = `<path d="${minor}" stroke="#252d37"/><path d="${major}" stroke="#2f394c"/>`;
});

define('view-cube', `<style>
:host{display:grid;grid-template:20px 46px 20px / 20px 46px 20px;place-items:center;color:#b4b6b9;font-size:11px}
svg{position:absolute;inset:8px;width:70px;height:70px}
span{position:relative}
.n{grid-area:1/2}.w{grid-area:2/1}.e{grid-area:2/3}.s{grid-area:3/2}
button{grid-area:2/2;position:relative;width:30px;height:30px;background:#a3a8ae;border:3px solid #b1b3b5;color:#3f454d;font-size:16px;line-height:22px}
</style><svg viewBox="0 0 70 70"><circle cx="35" cy="35" r="31.500" fill="none" stroke="#4b5159" stroke-width="7"/></svg>
<span class="n">北</span><span class="w">西</span><button>上</button><span class="e">東</span><span class="s">南</span>`);

define('nav-bar', `<style>
:host{display:flex;flex-direction:column;align-items:center;width:33px;height:213px;padding:16px 0 16px;border:1px solid #4a5058;border-radius:4px;background:#646a71;justify-content:space-between}
cad-arrow{color:#444b54;width:5px;height:3px}
button{height:26px}
i{position:absolute;right:3px;width:8px;height:8px;border:1px solid #4c535c;border-radius:50%}
</style><i style="top:2px"></i>
<button aria-label="ホイール"><cad-icon name="wheel" size="26"></cad-icon></button><cad-arrow></cad-arrow>
<button aria-label="画面移動"><cad-icon name="hand" size="24"></cad-icon></button>
<button aria-label="ズーム"><cad-icon name="zoomx" size="26"></cad-icon></button><cad-arrow></cad-arrow>
<button aria-label="オービット"><cad-icon name="orbit" size="24"></cad-icon></button><cad-arrow></cad-arrow>
<button aria-label="ShowMotion"><cad-icon name="motion" size="26"></cad-icon></button><i style="bottom:2px"></i>`);

define('viewport-palette', `<style>
:host{display:grid;grid-template:minmax(0,1fr)/26px minmax(0,1fr);width:798px;height:248px;padding:3px 3px 4px 0;background:#505050;border:1px solid #3e3e3e;border-radius:4px;color:#111}
.bar{display:flex;flex-direction:column;align-items:center;padding:0 4px 0 0;gap:7px}
.bar button{height:12px}
.bar span{margin-top:auto;writing-mode:vertical-rl;text-orientation:sideways;transform:rotate(180deg);color:#b5b5b5}
.bar cad-icon[name=cube]{margin-top:1px}
.win{display:flex;flex-direction:column;background:#f0f0f0;border:1px solid #2f2f2f;min-width:0}
.tabs{display:flex;align-items:flex-end;height:26px;gap:1px}
.tabs button{height:24px;padding:0 4px 1px;border:1px solid #8a8a8a;border-bottom:0;background:linear-gradient(#f2f2f2,#cfcfcf)}
.tabs button.on{height:26px;background:#fff;border:0;padding:0 6px 2px 7px;position:relative;z-index:1}
.tabs button:last-child{padding:0 5px 1px}
.page{flex:1;display:flex;background:#fff;margin:-1px 3px 1px 0;border:1px solid #828790;border-left:0;padding:5px 5px 6px 7px;min-height:0}
.list{flex:1;border:1px solid #828790;overflow:hidden}
table{width:100%;border-collapse:separate;border-spacing:0;table-layout:fixed}
th,td{padding:0 0 0 6px;text-align:left;font-weight:400;height:22px;border-right:1px solid #ececec;border-bottom:1px solid #ececec;white-space:nowrap;overflow:hidden}
th{height:25px;background:linear-gradient(#fff,#f2f3f5);border-color:#dcdfe3}
th:last-child,td:last-child{border-right:0}
tr:last-child td{border-bottom:0}
</style>
<div class="bar"><button aria-label="閉じる"><cad-icon name="closeG"></cad-icon></button><button aria-label="自動的に隠す"><cad-icon name="pin"></cad-icon></button><button aria-label="設定"><cad-icon name="gearT" size="12"></cad-icon></button><span>ビューポート</span><cad-icon name="cube"></cad-icon></div>
<div class="win"><div class="tabs"><button class="on">ビューポートリスト</button><button>VPでフリーズ画層</button><button>プロパティの優先画層</button></div>
<div class="page"><div class="list"><table></table></div></div></div>`, (el, root) => {
  const w = [31,150,78,81,60,60,60,60,60];
  const head = ['', 'レイアウト名','尺度','カスタム...','ロック','フリーズ','上書き','クリッ...','注釈尺度',''];
  const rows = [['1','レイアウト1','1： 500','0.002','いいえ','--','--','いいえ','1:1000',''],['2','レイアウト2','1： 1000','0.001','いいえ','--','--','いいえ','1:1000','']];
  while (rows.length < 8) rows.push(Array(10).fill(''));
  root.querySelector('table').innerHTML = `<colgroup>${w.map(x => `<col style="width:${x}px">`).join('')}<col></colgroup><thead><tr>${head.map(h => `<th>${h}</th>`).join('')}</tr></thead><tbody>${rows.map(r => `<tr>${r.map(c => `<td>${c}</td>`).join('')}</tr>`).join('')}</tbody>`;
});

define('drawing-view', `<style>
:host{display:block;position:relative;flex:1;min-height:0;background:#212830;overflow:hidden;border-top:1px solid #5c5c5c}
.label{position:absolute;left:3px;top:6px;display:flex}
.win{position:absolute;right:9px;top:9px;display:flex;gap:7px}
.win button{width:13px;height:12px}
view-cube{position:absolute;right:5px;top:29px}
.wcs{position:absolute;right:27px;top:123px;width:45px;height:18px;border-radius:4px;border:1px solid #a0a4a9;background:#8b9097;color:#4c525b;font-size:10px;gap:5px}
.wcs cad-arrow{opacity:.4}
nav-bar{position:absolute;right:3px;top:166px}
viewport-palette{position:absolute;left:111px;top:92px}
.ucs{position:absolute;left:10px;bottom:8px}
.ucs text{font:300 18px Lato,"Noto Sans",sans-serif;fill:#eee}
.cross{position:absolute;left:890px;top:354px}
</style>
<drawing-grid></drawing-grid>
<div class="label"><span>[−]</span><span>[平面図]</span><span>[2D ワイヤフレーム]</span></div>
<div class="win"><button aria-label="最小化"><cad-icon name="minW"></cad-icon></button><button aria-label="元に戻す"><cad-icon name="restW"></cad-icon></button><button aria-label="閉じる"><cad-icon name="closeW"></cad-icon></button></div>
<view-cube></view-cube>
<button class="wcs">WCS<cad-arrow big></cad-arrow></button>
<nav-bar></nav-bar>
<svg class="cross" width="194" height="194" viewBox="0 0 194 194"><path d="M96.500 0V90M96.500 103V193M0 96.500H90M103 96.500H193" stroke="#f5f5f5"/><path d="M90.500 90.500h12v12h-12z" fill="none" stroke="#f5f5f5"/></svg>
<svg class="ucs" width="80" height="90" viewBox="0 0 80 90"><path d="M6.500 32V81.500H57M2.500 76.500h9v9h-9z" fill="none" stroke="#eee"/><text x="9" y="28">Y</text><text x="62" y="80">X</text></svg>
<viewport-palette></viewport-palette>`);

/* ---------- command line ---------- */
define('command-line', `<style>
:host{display:grid;flex:none;grid-template-columns:22px minmax(0,1fr);height:55px;border-top:3px solid #5d5d5d;color:#111}
.bar{display:flex;flex-direction:column;align-items:center;gap:5px;padding-top:4px;background:linear-gradient(90deg,#3f3f3f,#5f5f5f)}
.bar button{height:15px}
.grip{width:17px;height:5px;background:radial-gradient(circle,#aaa 1px,transparent 1px) 0 0/3px 3px}
.log{height:29px;padding:10px 2px 0;background:#c8c8c8;border-bottom:1px solid #7d7d7d}
.in{display:flex;align-items:center;height:23px;background:#fff;padding-left:5px;gap:3px}
input{flex:1;margin-left:3px;font-feature-settings:"palt"}
input::placeholder{color:#8c8c8c;opacity:1}
.in cad-arrow{color:#777}
</style><div class="bar"><div class="grip"></div><button aria-label="閉じる"><cad-icon name="closeW" size="11"></cad-icon></button><button aria-label="カスタマイズ"><cad-icon name="wrench" size="14"></cad-icon></button></div>
<div><div class="log">モデルを再作図中。</div><div class="in"><cad-icon name="prompt"></cad-icon><cad-arrow></cad-arrow><input aria-label="コマンド" placeholder="ここにコマンドを入力"></div></div>`);

/* ---------- properties ---------- */
const GROUPS = {
  '一般': [['色','ByLayer',0,'sw'],['画層','0'],['線種','ByLayer',0,'ln'],['線種尺度','1'],['線の太さ','ByLayer',0,'ln'],['透過性','ByLayer'],['厚さ','0']],
  '3D 表示': [['マテリアル','ByLayer'],['影による表示','影を投じる/受ける']],
  '印刷スタイル': [['印刷スタイル','ByColor',1],['印刷スタイル…','なし'],['アタッチされ…','モデル',1],['印刷テーブル…','使用できません。',1]],
  'ビュー': [['中心 X','4079.4771',1],['中心 Y','1440.6841',1],['中心 Z','0',1],['高さ','2533.9452',1],['幅','4865.8483',1]],
  'その他': [['注釈尺度','1:1_1'],['UCS アイコ…','はい'],['原点に UCS…','はい']]
};
define('property-group', `<style>
:host{display:block;margin-bottom:4px}
h3{display:flex;align-items:center;justify-content:space-between;height:22px;margin:0;padding:0 7px 2px 6px;font-size:12px;line-height:16px;background:#4a4a4a;border:1px solid #303030;color:#fff}
h3 i{width:6px;height:2px;background:#fff;margin-top:4px}
dl{margin:0 0 0 17px;border-left:1px solid #545454}
dl div{display:grid;grid-template-columns:99px minmax(0,1fr);height:22px;border-bottom:1px solid #525252}
dt{padding-left:6px;line-height:21px;border-right:1px solid #525252;white-space:nowrap;overflow:hidden}
dt span{font-family:"Noto Sans CJK JP",sans-serif}
dd{display:flex;align-items:center;margin:0;padding-left:2px;height:21px;white-space:nowrap}
.dim{color:#a8a8a8}
.en{font-size:13px}
.sw{width:10px;height:10px;background:#fff;border:1px solid #111;margin-right:6px;margin-left:1px}
.ln{width:53px;height:1px;background:#fff;margin:0 5px 0 3px}
</style><h3><span></span><i></i></h3><dl></dl>`, (el, root) => {
  const g = GROUPS[el.getAttribute('name')];
  root.querySelector('span').textContent = el.getAttribute('name');
  root.querySelector('dl').innerHTML = g.map(([k, v, dim, deco]) =>
    `<div><dt>${k.replace('…', '<span>…</span>')}</dt><dd class="${dim ? 'dim ' : ''}${/^By/.test(v) ? 'en' : ''}">${deco ? `<i class="${deco}"></i>` : ''}${v}</dd></div>`).join('');
});

define('properties-palette', `<style>
:host{display:grid;grid-template:minmax(0,1fr)/25px minmax(0,1fr);background:#5d5d5d;min-height:0;width:293px}
.side{display:flex;flex-direction:column;padding-top:28px}
.side button{height:121px;border:1px solid #3a3a3a;border-radius:4px 0 0 4px;color:#b0b0b0;background:#565656}
.side button.on{background:#5d5d5d;border-right:0;color:#fff}
.side span{writing-mode:vertical-rl;text-orientation:sideways;transform:rotate(180deg)}
.main{display:flex;flex-direction:column;min-height:0;padding-bottom:15px}
header{flex:none;height:23px;margin:3px 2px 0 3px;background:#545454;padding:4px 11px 3px}
.pick{display:flex;flex:none;align-items:center;margin:12px 8px 0 5px;height:23px}
.pick select{flex:none;width:166px;height:23px;border:1px solid #353535;padding:0 3px;background:linear-gradient(#747474,#606060);line-height:20px}
.pick .d{flex:none;width:14px;height:23px;border:1px solid #353535;border-left:0;background:#666}
.pick .i{margin-left:8px}
.scroll{flex:1;display:grid;grid-template-columns:minmax(0,1fr) 5px;gap:10px;min-height:0;overflow:hidden;margin:4px 3px 0 10px}
.thumb{background:#454545;border-radius:3px;height:511px}
</style>
<div class="side" role="tablist">${['デザイン','オブジェクト クラス','表示','表示 (2)','拡張データ'].map((t, i) => `<button role="tab" class="${i ? '' : 'on'}"><span>${t}</span></button>`).join('')}</div>
<div class="main"><header>プロパティ</header>
<div class="pick"><select aria-label="選択"><option>何も選択されていません</option></select><button class="d" aria-label="一覧"><cad-arrow></cad-arrow></button>
<button class="i" aria-label="追加"><cad-icon name="addsel"></cad-icon></button><button class="i" aria-label="選択"><cad-icon name="pick" size="15"></cad-icon></button><button class="i" aria-label="クイック選択"><cad-icon name="quick"></cad-icon></button></div>
<div class="scroll"><div>${['一般','3D 表示','印刷スタイル','ビュー','その他'].map(n => `<property-group name="${n}"></property-group>`).join('')}</div><div class="thumb"></div></div></div>`);

/* ---------- status bar ---------- */
define('layout-tabs', `<style>
:host{display:flex;align-items:flex-start;padding-left:11px}
button{position:relative;height:18px;color:#a0a0a0;width:92px;margin-left:-3px;z-index:0}
button::before{content:"";position:absolute;inset:0;background:linear-gradient(#474747,#5c5c5c);clip-path:polygon(0 0,100% 0,92% 88%,88% 100%,13% 100%,9% 88%);z-index:-1}
.on{width:62px;color:#fff;font-weight:700;margin-left:0}
.on::before{background:linear-gradient(#555,#757575)}
.add{width:28px}
.add::before{clip-path:polygon(20% 0,100% 0,85% 80%,70% 100%,10% 100%,0 80%)}
</style><button class="on">モデル</button><button>レイアウト1</button><button>レイアウト2</button><button class="add" aria-label="レイアウトを追加"><cad-icon name="plus" size="10"></cad-icon></button>`);

const si = (n, s = 18) => `<button aria-label="${n}"><cad-icon name="${n}" size="${s}"></cad-icon></button>`;
const A = '<cad-arrow big></cad-arrow>';
define('status-bar', `<style>
:host{display:flex;flex:none;justify-content:space-between;height:29px;background:#383838}
.st{display:flex;gap:1px;height:28px;padding-top:1px;background:#505050}
.c{display:flex;flex:none;align-items:center;justify-content:space-evenly;height:26px;border:1px solid #7b7b7b;background:#4c4c4c;white-space:nowrap;color:#fff}
.c cad-arrow{width:7px;height:5px}
.xy{justify-content:flex-end;padding-right:4px;color:#a6a6a6}
b{font-weight:600}
</style><layout-tabs></layout-tabs>
<div class="st">
<div class="c xy" style="width:182px">-30.1697, -18.6389, 0.0000</div>
<div class="c" style="width:38px"><button style="font-size:11px"><b>モデル</b></button></div>
<div class="c" style="width:65px">${si('sgrid',16)}${si('sdots',16)}${A}</div>
<div class="c" style="width:25px">${si('sinfer')}</div>
<div class="c" style="width:102px">${si('sortho',16)}${si('spolar',16)}${A}${si('siso')}${A}</div>
<div class="c" style="width:63px">${si('sangle')}${si('sosnap')}${A}</div>
<div class="c" style="width:39px">${si('slw')}${A}</div>
<div class="c" style="width:26px">${si('strans',16)}</div>
<div class="c" style="width:122px">${si('sp1',18)}${si('sp2',18)}${si('sp3',18)}<button>1:1_1</button>${A}</div>
<div class="c" style="width:40px">${si('gearS',14)}${A}</div>
<div class="c" style="width:25px">${si('splus',16)}</div>
<div class="c" style="width:98px">${si('sruler',14)}<button><b>十進表記</b></button>${A}</div>
<div class="c" style="width:25px">${si('scalc',14)}</div>
<div class="c" style="width:26px">${si('shw',18)}</div>
<div class="c" style="width:31px">${si('siso2',16)}</div>
<div class="c" style="width:51px">${si('sfull',18)}${si('smenu',17)}</div>
</div>`);

define('cad-app', `<style>
:host{display:flex;flex-direction:column;height:100vh;min-height:600px;padding:2px 3px 4px;background:#636363;box-shadow:inset 0 2px #2c2627,inset 0 -1px #2c2627;position:relative}
app-menu{position:absolute;left:3px;top:4px}
main{flex:1;display:grid;grid-template:minmax(0,1fr)/minmax(0,1fr) auto;gap:3px;min-height:0}
.left{display:flex;flex-direction:column;min-height:0;min-width:0}
</style><title-bar></title-bar><app-menu></app-menu><ribbon-tabs></ribbon-tabs><cad-ribbon></cad-ribbon><doc-tabs></doc-tabs>
<main><div class="left"><drawing-view></drawing-view><command-line></command-line></div><properties-palette></properties-palette></main>
<status-bar></status-bar>`);
</script>
</body>
</html>
